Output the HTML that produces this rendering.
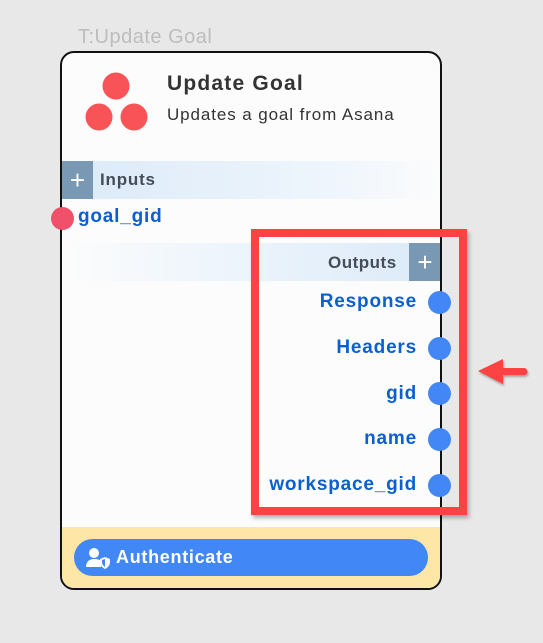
<!DOCTYPE html>
<html><head><style>
*{margin:0;padding:0;box-sizing:border-box}
body{width:543px;height:643px;background:#e8e8e8;position:relative;overflow:hidden;font-family:"Liberation Sans",sans-serif}
.abs{position:absolute}
.card{left:60px;top:51px;width:382px;height:539px;border:2px solid #111;border-radius:14px;background:#fcfcfc;overflow:hidden}
.lbl{color:#0b5fd1;font-weight:bold;font-size:19px;letter-spacing:0.8px}
.dot{width:23px;height:23px;border-radius:50%;background:#4287f5}
</style></head><body>
<div class="abs" style="left:78px;top:26px;font-size:20px;color:#bdbdbd;letter-spacing:0.5px">T:Update Goal</div>
<div class="abs card">
  <div class="abs" style="left:0;top:108px;width:380px;height:38px;background:linear-gradient(90deg,#dbeaf8,#eef5fc 70%,#fcfcfc)"></div>
  <div class="abs" style="left:0;top:108px;width:31px;height:38px;background:#7898b4;color:#fff;font-size:26px;text-align:center;line-height:38px">+</div>
  <div class="abs" style="left:38px;top:117px;font-size:17px;font-weight:bold;color:#444d58;letter-spacing:0.8px">Inputs</div>
  <div class="abs" style="left:0;top:190px;width:380px;height:38px;background:linear-gradient(90deg,#fcfcfc,#eef5fc 40%,#dbeaf8)"></div>
  <div class="abs" style="left:347px;top:190px;width:32px;height:38px;background:#7898b4;color:#fff;font-size:26px;text-align:center;line-height:38px">+</div>
  <div class="abs" style="left:266px;top:200px;font-size:17px;font-weight:bold;color:#444d58;letter-spacing:0.5px">Outputs</div>
  <div class="abs" style="left:0;top:474px;width:380px;height:70px;background:#fee6a6"></div>
  <div class="abs" style="left:12px;top:486px;width:354px;height:37px;border-radius:19px;background:#4187f5;color:#fff;font-weight:bold;font-size:18px;line-height:37px;padding-left:42px;letter-spacing:0.7px">Authenticate</div>
  <svg class="abs" style="left:24px;top:494px" width="24" height="22" viewBox="0 0 24 22"><circle cx="8" cy="6" r="5" fill="#fff"/><path d="M0 20c0-6 4-8 8-8s6 1 7 2v6z" fill="#fff"/><path d="M14 12l5-2 5 2v3c0 4-3 6-5 7-2-1-5-3-5-7z" fill="#fff"/><path d="M19 12v8c-1-1-3-2-3-5v-2z" fill="#4187f5"/></svg>
</div>
<div class="abs" style="left:167px;top:72px;font-size:21px;font-weight:bold;color:#333;letter-spacing:1.2px">Update Goal</div>
<div class="abs" style="left:167px;top:105px;font-size:17px;color:#333;letter-spacing:0.9px">Updates a goal from Asana</div>
<svg class="abs" style="left:80px;top:70px" width="70" height="65"><circle cx="36" cy="16" r="13.5" fill="#f85356"/><circle cx="19" cy="47" r="13.5" fill="#f85356"/><circle cx="54" cy="47" r="13.5" fill="#f85356"/></svg>
<div class="abs" style="left:51px;top:207px;width:23px;height:23px;border-radius:50%;background:#f0506a"></div>
<div class="abs lbl" style="left:78px;top:206px">goal_gid</div>
<div class="abs lbl" style="right:126px;top:291px">Response</div>
<div class="abs lbl" style="right:126px;top:337px">Headers</div>
<div class="abs lbl" style="right:126px;top:383px">gid</div>
<div class="abs lbl" style="right:126px;top:428px">name</div>
<div class="abs lbl" style="right:126px;top:474px">workspace_gid</div>
<div class="abs dot" style="left:428px;top:291px"></div>
<div class="abs dot" style="left:428px;top:337px"></div>
<div class="abs dot" style="left:428px;top:382px"></div>
<div class="abs dot" style="left:428px;top:428px"></div>
<div class="abs dot" style="left:428px;top:474px"></div>
<div class="abs" style="left:251px;top:229px;width:216px;height:286px;border:8px solid #fb4343;box-shadow:2px 3px 4px rgba(0,0,0,.3)"></div>
<svg class="abs" style="left:476px;top:356px" width="56" height="32"><path d="M2 15L27 3v9h21a3.5 3.5 0 0 1 0 7H27v9z" fill="#fb4343" style="filter:drop-shadow(1px 2px 1px rgba(0,0,0,.3))"/></svg>
</body></html>
